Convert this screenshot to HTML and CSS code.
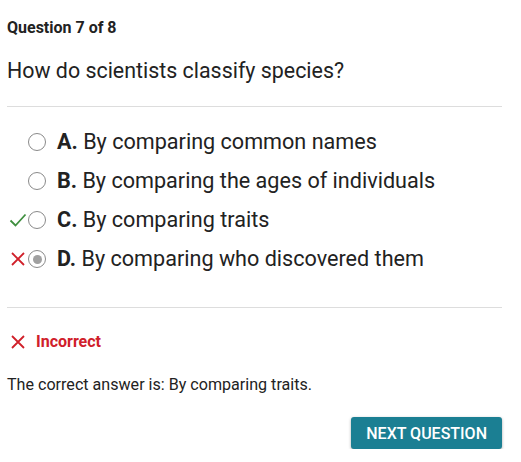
FILE: index.html
```html
<!DOCTYPE html>
<html>
<head>
<meta charset="utf-8">
<link rel="stylesheet" href="styles.css">
</head>
<body>
<div class="quiz">
  <div class="counter">Question 7 of 8</div>
  <div class="question">How do scientists classify species?</div>
  <hr class="rule">
  <div class="options">
    <div class="option">
      <span class="mark"></span>
      <span class="radio"></span>
      <span class="label"><b>A.</b> By comparing common names</span>
    </div>
    <div class="option">
      <span class="mark"></span>
      <span class="radio"></span>
      <span class="label"><b>B.</b> By comparing the ages of individuals</span>
    </div>
    <div class="option">
      <span class="mark"><svg width="18" height="16" viewBox="0 0 18 16"><path d="M1.5 8.5 L6.5 13.5 L16.5 2.5" fill="none" stroke="#3f8f3f" stroke-width="1.8"/></svg></span>
      <span class="radio"></span>
      <span class="label"><b>C.</b> By comparing traits</span>
    </div>
    <div class="option">
      <span class="mark"><svg width="16" height="16" viewBox="0 0 16 16"><path d="M2 2 L14 14 M14 2 L2 14" fill="none" stroke="#d0202a" stroke-width="1.8"/></svg></span>
      <span class="radio selected"></span>
      <span class="label"><b>D.</b> By comparing who discovered them</span>
    </div>
  </div>
  <hr class="rule rule2">
  <div class="result">
    <svg width="16" height="16" viewBox="0 0 16 16"><path d="M2 2 L14 14 M14 2 L2 14" fill="none" stroke="#d0202a" stroke-width="1.8"/></svg>
    <span class="result-text">Incorrect</span>
  </div>
  <div class="answer">The correct answer is: By comparing traits.</div>
  <div class="actions">
    <button class="next">NEXT QUESTION</button>
  </div>
</div>
</body>
</html>
```

FILE: styles.css
```css
html, body {
  margin: 0;
  padding: 0;
  background: #fff;
}
body {
  font-family: Roboto, "Liberation Sans", sans-serif;
  color: #222;
}
.quiz {
  padding: 16px 19px 0 7px;
}
.counter {
  font-size: 16px;
  font-weight: 700;
  line-height: 24px;
}
.question {
  font-size: 21.4px;
  line-height: 28px;
  margin-top: 17px;
}
.rule {
  border: 0;
  border-top: 1px solid #ddd;
  margin: 21px 0 0 0;
}
.options {
  margin-top: 21px;
  display: flex;
  flex-direction: column;
  gap: 11px;
}
.option {
  display: flex;
  align-items: center;
  height: 28px;
}
.mark {
  width: 21px;
  display: flex;
  justify-content: center;
}
.radio {
  width: 16px;
  height: 16px;
  border: 1.3px solid #8a8a8a;
  border-radius: 50%;
  box-sizing: content-box;
  margin-right: 11px;
  position: relative;
  flex: none;
}
.radio.selected::after {
  content: "";
  position: absolute;
  left: 3.5px;
  top: 3.5px;
  width: 9px;
  height: 9px;
  border-radius: 50%;
  background: #a0a0a0;
}
.label {
  font-size: 21.6px;
  line-height: 28px;
  color: #222;
}
.label b {
  font-weight: 700;
}
.rule2 {
  margin-top: 34px;
}
.result {
  display: flex;
  align-items: center;
  gap: 10px;
  margin-top: 24px;
  padding-left: 3px;
}
.result-text {
  color: #d0202a;
  font-weight: 700;
  font-size: 16px;
}
.answer {
  margin-top: 22px;
  font-size: 16.1px;
  line-height: 24px;
}
.actions {
  display: flex;
  justify-content: flex-end;
  margin-top: 20px;
}
.next {
  background: #1b7f93;
  color: #fff;
  border: 0;
  border-radius: 3px;
  font-family: Roboto, "Liberation Sans", sans-serif;
  font-size: 16px;
  font-weight: 500;
  height: 32px;
  padding: 0 15px;
  box-shadow: 0 1px 3px rgba(0,0,0,0.35);
}
```
